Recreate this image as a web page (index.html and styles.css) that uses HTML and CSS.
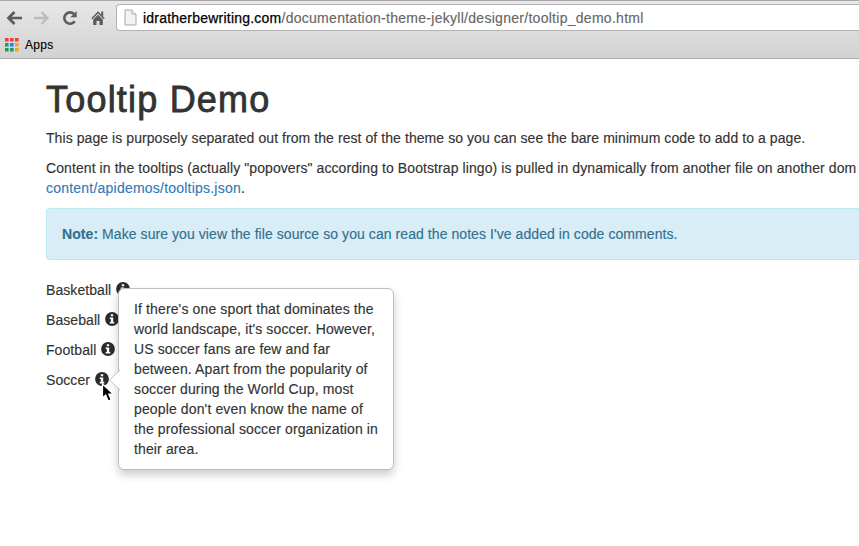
FILE: index.html
```html
<!DOCTYPE html>
<html lang="en">
<head>
<meta charset="utf-8">
<title>Tooltip Demo</title>
<link rel="stylesheet" href="styles.css">
</head>
<body>
<svg width="0" height="0" class="defs">
  <symbol id="info" viewBox="0 0 14 14">
    <circle cx="7" cy="7" r="6.9" fill="#2b2b2b"/>
    <path fill="#fff" d="M5.8 2.2h2.4v2H5.8zM4.7 5.4h3.5v4.5h1.1v1.5H4.7V9.9h1.1V6.9H4.7z"/>
  </symbol>
</svg>
<header class="browser">
  <div class="toolbar">
    <div class="nav">
      <svg class="back" width="17" height="16" viewBox="0 0 17 16"><path d="M16 8H3M8.5 2L2.5 8l6 6" fill="none" stroke="#5c5c5c" stroke-width="2.7"/></svg>
      <svg class="forward" width="17" height="16" viewBox="0 0 17 16"><path d="M1 8h13M8.5 2l6 6-6 6" fill="none" stroke="#bcbcbc" stroke-width="2.4"/></svg>
      <svg class="reload" width="16" height="16" viewBox="0 0 16 16"><path d="M12.7 11.3A5.7 5.7 0 1 1 12 4" fill="none" stroke="#5c5c5c" stroke-width="2.6"/><path d="M14.7 1v6.3H8.4z" fill="#5c5c5c"/></svg>
      <svg class="home" width="14" height="16" viewBox="0 0 14 16"><path d="M7 1.3L13.7 8.200l-1 1L7 3.5 1.3 9.2l-1-1zM10.200 1.500h2v5l-2-2zM7 4.8l4.8 4.7V15H8.5v-4h-3v4H2.2V9.5z" fill="#5c5c5c"/></svg>
    </div>
    <div class="address">
      <svg class="file" width="13" height="17" viewBox="0 0 13 17"><path d="M1 1h7l4 4v11H1z" fill="#f3f3f3" stroke="#a9a9a9"/><path d="M8 1v4h4" fill="#fff" stroke="#a9a9a9"/></svg>
      <span class="url"><span class="host">idratherbewriting.com</span>/documentation-theme-jekyll/designer/tooltip_demo.html</span>
    </div>
  </div>
  <div class="bookmarks">
    <svg width="14" height="14" viewBox="0 0 14 14">
      <path fill="#f03e36" d="M0 0h3.600v3.600H0zM5 0h3.600v3.600H5zM10 0h3.600v3.600H10z"/>
      <path fill="#229a57" d="M0 5h3.600v3.600H0zM0 10h3.600v3.600H0zM5 10h3.600v3.600H5z"/>
      <path fill="#2482ed" d="M5 5h3.600v3.600H5z"/>
      <path fill="#f5a51c" d="M10 5h3.600v3.600H10zM10 10h3.600v3.600H10z"/>
    </svg>
    <span class="apps">Apps</span>
  </div>
</header>
<main class="page">
  <h1>Tooltip Demo</h1>
  <p>This page is purposely separated out from the rest of the theme so you can see the bare minimum code to add to a page.</p>
  <p><span class="detail">Content in the tooltips (actually "popovers" according to Bootstrap lingo) is pulled in dynamically from another file on another dom</span><br><a href="#">content/apidemos/tooltips.json</a>.</p>
  <div class="alert"><b>Note:</b> Make sure you view the file source so you can read the notes I've added in code comments.</div>
  <p>Basketball <svg class="info"><use href="#info"/></svg></p>
  <p>Baseball <svg class="info"><use href="#info"/></svg></p>
  <p>Football <svg class="info"><use href="#info"/></svg></p>
  <p>Soccer <svg class="info"><use href="#info"/></svg></p>
</main>
<div class="popover">
  <svg class="arrow" width="12" height="22" viewBox="0 0 12 22"><path d="M12 1L1.5 11 12 21" fill="#fff" stroke="#bdbdbd"/></svg>
  If there's one sport that dominates the<br>world landscape, it's soccer. However,<br>US soccer fans are few and far<br>between. Apart from the popularity of<br>soccer during the World Cup, most<br>people don't even know the name of<br>the professional soccer organization in<br>their area.
</div>
<svg class="cursor" width="14" height="20" viewBox="0 0 14 20"><path d="M1.5 1v14l3.200-3 2.500 6 3-1.300L7.700 11h4.600z" fill="#000" stroke="#fff" stroke-width="1.2"/></svg>
</body>
</html>
```
FILE: styles.css
```css
* { box-sizing: border-box; }
body {
  margin: 0;
  height: 546px;
  overflow: hidden;
  position: relative;
  background: #fff;
  color: #333;
  font: 14px/20px "Liberation Sans", Arial, sans-serif;
  letter-spacing: .07px;
  -webkit-text-stroke: .15px;
}
svg { flex: none; }
.defs { position: absolute; }
.browser {
  height: 59px;
  border-top: 1px solid #a9a7a9;
  border-bottom: 1px solid #acacac;
  background: linear-gradient(#e9e8e9, #d2d2d2);
}
.toolbar { display: flex; padding-top: 3px; }
.nav { display: flex; width: 116px; padding: 6px 0 0 6px; }
.forward { margin-left: 10px; }
.reload { margin-left: 12px; }
.home { margin-left: 13px; }
.address {
  display: flex;
  align-items: center;
  flex: 1;
  height: 27px;
  padding-left: 7px;
  border: 1px solid #b4b4b4;
  border-right: 0;
  border-radius: 4px 0 0 4px;
  background: #fff;
}
.url { margin-left: 6px; color: #666; white-space: nowrap; letter-spacing: .28px; }
.host { color: #000; letter-spacing: .22px; -webkit-text-stroke: .25px #000; }
.bookmarks { display: flex; padding: 7px 0 0 5px; }
.apps { margin: -3px 0 0 6px; color: #000; font-size: 12px; letter-spacing: .3px; }
.page { padding: 21px 0 0 46px; white-space: nowrap; }
h1 {
  margin: 0 0 8px;
  font-size: 36px;
  font-weight: 400;
  line-height: 39.6px;
  letter-spacing: 1.2px;
  -webkit-text-stroke: .8px #333;
}
p { margin: 0 0 10px; }
.detail { letter-spacing: .085px; }
a { color: #337ab7; text-decoration: none; letter-spacing: .22px; }
.alert {
  height: 52px;
  margin-bottom: 20px;
  padding: 15px;
  border: 1px solid #bce8f1;
  border-right: 0;
  border-radius: 4px 0 0 4px;
  background: #d9edf7;
  color: #31708f;
}
.info { width: 14px; height: 14px; margin-left: 1px; vertical-align: -1px; }
.popover {
  position: absolute;
  left: 118px;
  top: 288px;
  width: 276px;
  height: 182px;
  padding: 10px 15px;
  border: 1px solid #bdbdbd;
  border-radius: 6px;
  background: #fff;
  box-shadow: 0 5px 10px rgba(0, 0, 0, .2);
  letter-spacing: .13px;
  white-space: nowrap;
}
.arrow { position: absolute; left: -11px; top: 80px; }
.cursor { position: absolute; left: 101px; top: 383px; }
```
